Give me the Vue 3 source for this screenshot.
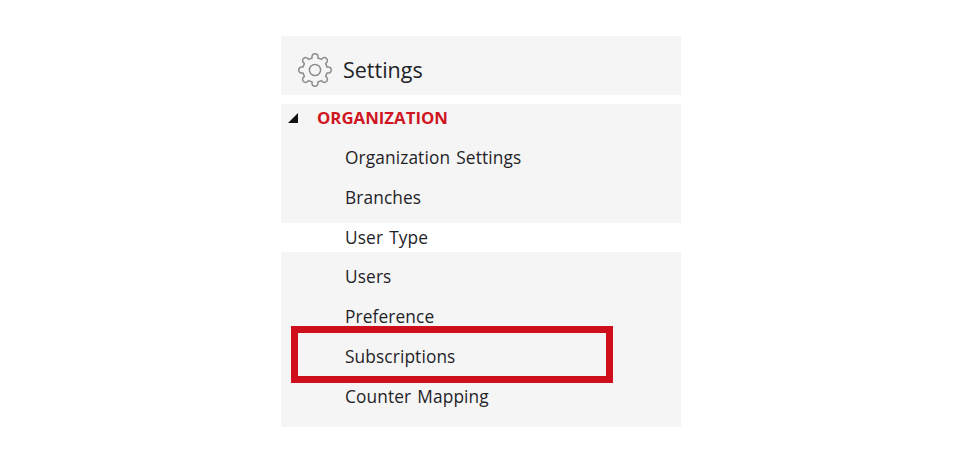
<template>
  <div class="page">
    <div class="settings-menu">
      <div class="menu-title">
        <svg class="gear" viewBox="0 0 36 36" width="36" height="36">
          <path :d="gearPath" fill="none" stroke="#8c8c8c" stroke-width="1.5" stroke-linejoin="round" />
          <circle cx="18" cy="18" r="5.6" fill="none" stroke="#8c8c8c" stroke-width="1.5" />
        </svg>
        <span>Settings</span>
      </div>

      <div class="menu-block first">
        <div class="group-head">
          <span class="arrow"></span>
          <span class="group-name">ORGANIZATION</span>
        </div>
        <div class="item">Organization Settings</div>
        <div class="item">Branches</div>
      </div>

      <div class="item plain">User Type</div>

      <div class="menu-block last">
        <div class="item">Users</div>
        <div class="item">Preference</div>
        <div class="item highlighted">
          Subscriptions
          <span class="red-box"></span>
        </div>
        <div class="item">Counter Mapping</div>
      </div>
    </div>
  </div>
</template>

<script setup>
// 8 tooth gear outline, teeth are rounded bumps
const teeth = 8;
const peak = 18.2;
const inner = 12.4;
let gearPath = "";
for (let i = 0; i < teeth; i++) {
  const step = (Math.PI * 2) / teeth;
  const a = i * step - Math.PI / 2;
  const at = (r, t) => {
    const x = 18 + r * Math.cos(a + t * step);
    const y = 18 + r * Math.sin(a + t * step);
    return `${x.toFixed(2)} ${y.toFixed(2)}`;
  };
  gearPath += `${i === 0 ? "M" : "L"}${at(inner, -0.3)}C${at(peak, -0.3)} ${at(peak, 0.3)} ${at(inner, 0.3)}`;
}
gearPath += "Z";
</script>

<style scoped>
.page {
  width: 961px;
  height: 462px;
  padding: 36px 0 0 281px;
  box-sizing: border-box;
  background: #fff;
  font-family: "Open Sans", "Liberation Sans", sans-serif;
  color: #1f2328;
  overflow: hidden;
}

.settings-menu {
  width: 400px;
}

.menu-title {
  display: flex;
  align-items: center;
  gap: 10px;
  height: 59px;
  padding: 8px 0 0 16px;
  box-sizing: border-box;
  background: #f5f5f5;
  font-size: 21.5px;
  margin-bottom: 9px;
}

.gear {
  flex-shrink: 0;
}

.menu-block {
  background: #f5f5f5;
}

.menu-block.first {
  height: 119px;
}

.menu-block.last {
  height: 175px;
  padding-top: 5px;
  box-sizing: border-box;
}

.group-head {
  display: flex;
  align-items: center;
  height: 27px;
  padding-bottom: 1px;
  margin-bottom: 6px;
}

.arrow {
  width: 0;
  height: 0;
  margin-left: 7px;
  border-style: solid;
  border-width: 0 0 10px 10px;
  border-color: transparent transparent #111 transparent;
}

.group-name {
  margin-left: 19px;
  font-size: 16.8px;
  font-weight: 700;
  color: #cf1622;
}

.item {
  position: relative;
  height: 40px;
  line-height: 39px;
  padding-left: 64px;
  font-size: 17.3px;
  letter-spacing: 0.12px;
  word-spacing: 1.5px;
}

.menu-block.last .item {
  line-height: 40px;
}

.item.plain {
  height: 29px;
  line-height: 29px;
}

.red-box {
  position: absolute;
  left: 10px;
  top: -11px;
  width: 322px;
  height: 57px;
  box-sizing: border-box;
  border: 7px solid #cf0e1c;
}
</style>
